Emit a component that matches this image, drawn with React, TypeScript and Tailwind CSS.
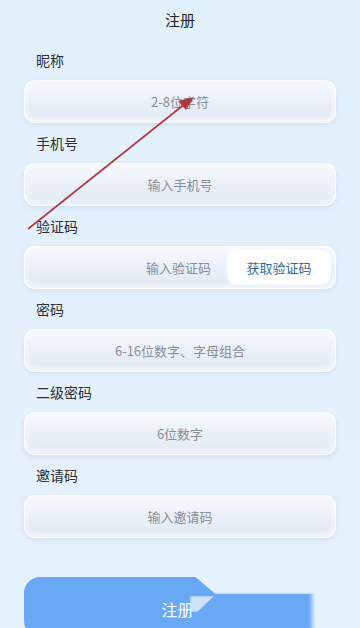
const fields = [
  { label: "昵称", placeholder: "2-8位字符" },
  { label: "手机号", placeholder: "输入手机号" },
  { label: "验证码", placeholder: "输入验证码", code: true },
  { label: "密码", placeholder: "6-16位数字、字母组合" },
  { label: "二级密码", placeholder: "6位数字" },
  { label: "邀请码", placeholder: "输入邀请码" },
];

function Field({ label, placeholder, code }: { label: string; placeholder: string; code?: boolean }) {
  return (
    <div className="flex flex-col">
      <div className="h-10 flex items-center pl-3 text-[14px] text-[#2b2f36]">{label}</div>
      <div className="h-[43px] rounded-[11px] bg-gradient-to-b from-[#f7f9fd] to-[#dfe8f5] border border-white/90 shadow-[0_2px_4px_rgba(150,175,210,0.25),inset_0_-3px_6px_rgba(255,255,255,0.7)] flex items-center">
        {code ? (
          <>
            <div className="flex-1 text-right pr-[16px] text-[13px] text-[#8a8f98]">{placeholder}</div>
            <div className="mr-[4px] w-[104px] h-[35px] rounded-[10px] bg-white flex items-center justify-center text-[13px] text-[#2f6c95]">
              获取验证码
            </div>
          </>
        ) : (
          <div className="flex-1 text-center text-[13px] text-[#8a8f98]">{placeholder}</div>
        )}
      </div>
    </div>
  );
}

export default function App() {
  return (
    <div
      className="relative w-[360px] h-[628px] overflow-hidden bg-gradient-to-b from-[#e2f0fc] to-[#e6f2fc] px-6"
      style={{ fontFamily: '"Noto Sans CJK SC", "Noto Sans", sans-serif' }}
    >
      <div className="h-10 flex items-center justify-center text-[15px] text-[#222]">注册</div>
      {fields.map((f) => (
        <Field key={f.label} {...f} />
      ))}
      <div className="mt-[39px] w-[291px] h-[60px] rounded-l-[16px] bg-[#69a8f4] flex items-start justify-center pt-[20px] text-[16px] text-white">
        <span className="ml-[16px]">注册</span>
      </div>

      {/* glitch overlays on the button */}
      <div className="absolute left-[192px] top-[574px] w-[130px] h-[20px] bg-[#e6f2fc] blur-[1px] [clip-path:polygon(0_0,100%_0,100%_100%,18%_100%)]" />
      <div className="absolute left-[190px] top-[596px] w-[24px] h-[16px] bg-[#cfe3fa] blur-[1px] [clip-path:polygon(0_0,100%_0,30%_100%,0_100%)]" />
      <div className="absolute left-[312px] top-[590px] w-[10px] h-[40px] bg-[#e6f2fc] blur-[2px]" />

      {/* red arrow annotation */}
      <svg className="absolute left-0 top-0 pointer-events-none" width="360" height="628">
        <line x1="28" y1="229" x2="186" y2="103" stroke="#b3383d" strokeWidth="1.6" />
        <polygon points="194,97 178,101 186,110" fill="#b3383d" />
      </svg>
    </div>
  );
}
